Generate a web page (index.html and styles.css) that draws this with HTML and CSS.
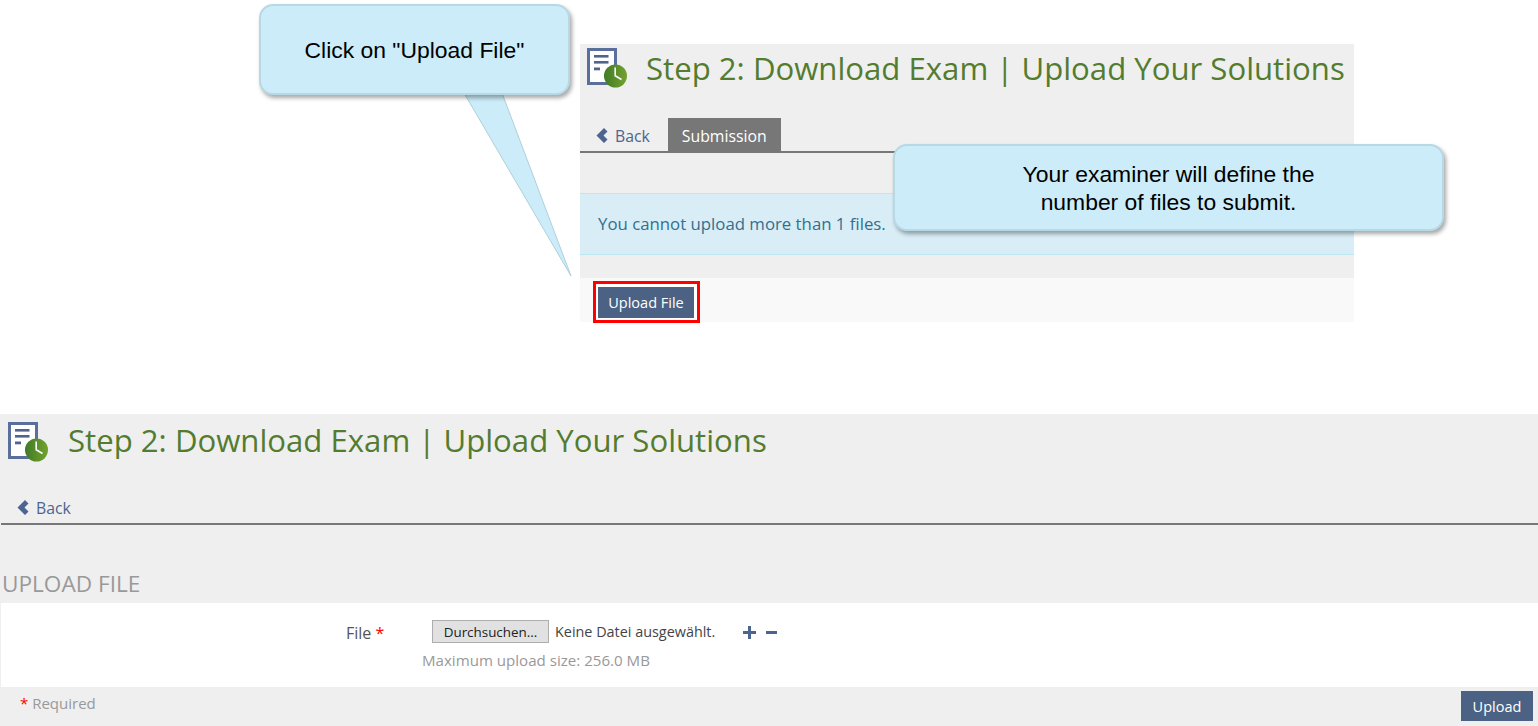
FILE: index.html
```html
<!DOCTYPE html>
<html lang="en">

<head>
    <meta charset="UTF-8">
    <title>Step 2: Download Exam | Upload Your Solutions</title>
    <link rel="stylesheet" href="styles.css">
</head>

<body>
    <svg width="0" height="0" class="defs">
        <defs>
            <linearGradient id="clockGreen" x1="0" y1="0" x2="1" y2="0">
                <stop offset="0" stop-color="#3f7a26" />
                <stop offset="1" stop-color="#73a32e" />
            </linearGradient>
            <symbol id="examIcon" viewBox="0 0 40 42">
                <rect x="1.5" y="1.5" width="27" height="34" fill="#fff" stroke="#5a6f9c" stroke-width="3" />
                <rect x="7" y="7" width="14.5" height="2.6" fill="#4f658f" />
                <rect x="7" y="13" width="14.5" height="2.6" fill="#4f658f" />
                <rect x="7" y="19.5" width="6" height="2.8" fill="#4f658f" />
                <circle cx="28.5" cy="28" r="11.5" fill="url(#clockGreen)" />
                <path d="M28.2 19.5V27.8L34.5 31.5" fill="none" stroke="#fff" stroke-width="1.6" />
            </symbol>
            <symbol id="chevron" viewBox="0 0 12 15">
                <path d="M8 0L0.5 7.5L8 15L11.5 11.5L7.5 7.5L11.5 3.5Z" fill="#4b6590" />
            </symbol>
        </defs>
    </svg>

    <section class="panel panel-top">
        <div class="head">
            <svg class="head-icon"><use href="#examIcon" /></svg>
            <h1>Step 2: Download Exam | Upload Your Solutions</h1>
        </div>
        <div class="tabs">
            <a class="back"><svg class="chevron"><use href="#chevron" /></svg>Back</a>
            <span class="tab">Submission</span>
        </div>
        <div class="alert">You cannot upload more than 1 files.</div>
        <div class="actions">
            <span class="mark"><button class="btn btn-marked">Upload File</button></span>
        </div>
    </section>

    <section class="panel panel-bottom">
        <div class="head">
            <svg class="head-icon"><use href="#examIcon" /></svg>
            <h1>Step 2: Download Exam | Upload Your Solutions</h1>
        </div>
        <div class="tabs">
            <a class="back"><svg class="chevron"><use href="#chevron" /></svg>Back</a>
        </div>
        <h2>UPLOAD FILE</h2>
        <div class="form">
            <div class="form-row">
                <label class="form-label">File <span class="star">*</span></label>
                <div class="form-field">
                    <div class="file-line">
                        <button class="file-btn">Durchsuchen...</button>
                        <span class="file-name">Keine Datei ausgewählt.</span>
                        <svg class="file-tool" viewBox="0 0 13 13"><path d="M5 0H8V5H13V8H8V13H5V8H0V5H5Z" /></svg>
                        <svg class="file-tool" viewBox="0 0 13 13"><path d="M1 5H12V8H1Z" /></svg>
                    </div>
                    <p class="file-hint">Maximum upload size: 256.0 MB</p>
                </div>
            </div>
        </div>
        <div class="form-foot">
            <span class="required"><span class="star">*</span> Required</span>
            <button class="btn btn-send">Upload</button>
        </div>
    </section>

    <!-- annotations lying over the screenshot -->
    <svg class="callout-tail" viewBox="0 0 120 190">
        <path d="M1 0L108 183L39 0" fill="#cbecf8" stroke="#aecfdb" stroke-width="1" />
    </svg>
    <div class="callout callout-upload">Click on "Upload File"</div>
    <div class="callout callout-files">Your examiner will define the<br>number of files to submit.</div>
</body>

</html>
```

FILE: styles.css
```css
* {
    box-sizing: border-box;
}

body {
    margin: 0;
    height: 726px;
    overflow: hidden;
    position: relative;
    background-color: #fff;
    font-family: "Open Sans", "Noto Sans", sans-serif;
    font-size: 16px;
    color: #555;
}

.defs {
    position: absolute;
}

.panel {
    background-color: #efefef;
}

.panel-top {
    width: 774px;
    height: 278px;
    margin: 44px 0 0 580px;
}

.panel-bottom {
    height: 312px;
    margin-top: 92px;
}

.head {
    display: flex;
    align-items: flex-start;
    height: 74px;
    padding: 4px 0 0 7px;
}

.panel-bottom .head {
    height: 76px;
    padding: 8px 0 0 8px;
}

.head-icon {
    width: 40px;
    height: 42px;
    flex: none;
}

h1 {
    margin: -1px 0 0 19px;
    font-size: 31.15px;
    font-weight: 400;
    line-height: 42px;
    color: #547c2f;
    white-space: nowrap;
}

.panel-bottom h1 {
    margin: -3px 0 0 20px;
}

.tabs {
    display: flex;
    align-items: stretch;
    height: 35px;
    padding-left: 16px;
    border-bottom: 2px solid #777;
    font-size: 15.8px;
}

.panel-bottom .tabs {
    margin-left: 1px;
}

.back {
    display: flex;
    align-items: center;
    padding-top: 2px;
    color: #4b6590;
    margin-right: 18px;
}

.chevron {
    width: 12px;
    height: 15px;
    margin-right: 7px;
}

.tab {
    display: flex;
    align-items: center;
    padding: 2px 14px 0;
    background-color: #777;
    color: #fff;
}

.alert {
    height: 62px;
    margin-top: 40px;
    padding-left: 18px;
    font-size: 16.8px;
    line-height: 60px;
    background-color: #d9edf7;
    border: 1px solid #bce8f1;
    border-width: 1px 0;
    color: #31708f;
}

.actions {
    height: 44px;
    margin-top: 23px;
    padding: 3px 0 0 13px;
    background-color: #f9f9f9;
}

.mark {
    display: inline-block;
    padding: 3px 3px 2px 2px;
    border: 3px solid #f00;
    background-color: #fff;
}

.btn {
    display: block;
    height: 30px;
    padding: 0;
    border: 0;
    background-color: #4b6285;
    color: #fff;
    font-family: inherit;
    font-size: 14.5px;
}

.btn-marked {
    width: 96px;
    height: 31px;
}

.btn-send {
    width: 72px;
}

h2 {
    margin: 44px 0 0 2px;
    font-size: 22.6px;
    font-weight: 400;
    line-height: 30px;
    color: #999;
}

.form {
    height: 84px;
    margin: 4px 0 0 1px;
    background-color: #fff;
}

.form-row {
    display: flex;
    padding-top: 17px;
}

.form-label {
    width: 384px;
    padding: 2px 0 0 345px;
    white-space: nowrap;
}

.star {
    color: #f00;
}

.form-field {
    margin-left: 47px;
}

.file-line {
    display: flex;
    align-items: center;
    font-size: 14.4px;
}

.file-btn {
    width: 117px;
    height: 23px;
    padding: 0;
    background-color: #e1e1e1;
    border: 1px solid #adadad;
    color: #222;
    font-family: inherit;
    font-size: 13.4px;
}

.file-name {
    margin-left: 6px;
    color: #444;
    width: 188px;
}

.file-tool {
    width: 13px;
    height: 13px;
    margin: 2px 9px 0 0;
    fill: #4b6590;
}

.file-hint {
    margin: 7px 0 0 -10px;
    font-size: 15.1px;
    line-height: 20px;
    color: #999;
}

.form-foot {
    display: flex;
    justify-content: space-between;
    align-items: center;
    padding: 4px 5px 5px 20px;
}

.required {
    margin-bottom: 6px;
    font-size: 15px;
    color: #999;
}

/* annotations */
.callout {
    position: absolute;
    display: flex;
    align-items: center;
    justify-content: center;
    text-align: center;
    background-color: #cbecf8;
    border: 2px solid #b7d9e5;
    border-radius: 14px;
    box-shadow: 2px 3px 4px rgba(0, 0, 0, .35);
    font-family: "Liberation Sans", Arial, sans-serif;
    font-size: 22.9px;
    line-height: 28px;
    color: #000;
}

.callout-upload {
    left: 259px;
    top: 4px;
    width: 311px;
    height: 91px;
}

.callout-files {
    left: 893px;
    top: 144px;
    width: 551px;
    height: 87px;
}

.callout-tail {
    position: absolute;
    left: 463px;
    top: 93px;
    width: 120px;
    height: 190px;
}
```
